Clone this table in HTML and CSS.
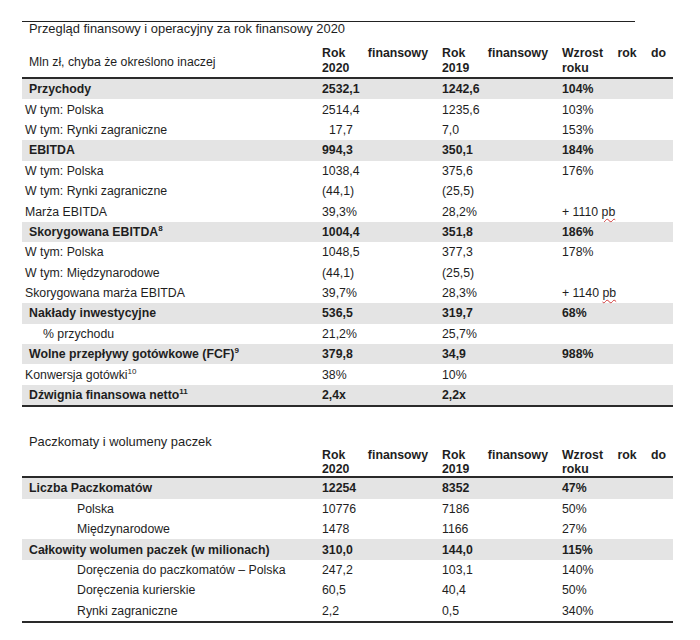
FILE: index.html
```html
<!DOCTYPE html>
<html lang="pl">
<head>
<meta charset="utf-8">
<title>Przegląd finansowy i operacyjny</title>
<link rel="stylesheet" href="styles.css">
</head>
<body>
<div class="doc">
  <div class="title title-first">Przegląd finansowy i operacyjny za rok finansowy 2020</div>
  <table class="fin">
    <colgroup><col class="c1"><col class="c2"><col class="c3"><col class="c4"></colgroup>
    <thead>
      <tr>
        <th class="lbl-head">Mln zł, chyba że określono inaczej</th>
        <th>Rok finansowy 2020</th>
        <th>Rok finansowy 2019</th>
        <th>Wzrost rok do roku</th>
      </tr>
    </thead>
    <tbody>
      <tr class="hl"><td class="lbl">Przychody</td><td>2532,1</td><td>1242,6</td><td>104%</td></tr>
      <tr><td class="lbl">W tym: Polska</td><td>2514,4</td><td>1235,6</td><td>103%</td></tr>
      <tr><td class="lbl">W tym: Rynki zagraniczne</td><td class="ind">17,7</td><td>7,0</td><td>153%</td></tr>
      <tr class="hl"><td class="lbl">EBITDA</td><td>994,3</td><td>350,1</td><td>184%</td></tr>
      <tr><td class="lbl">W tym: Polska</td><td>1038,4</td><td>375,6</td><td>176%</td></tr>
      <tr><td class="lbl">W tym: Rynki zagraniczne</td><td>(44,1)</td><td>(25,5)</td><td></td></tr>
      <tr><td class="lbl">Marża EBITDA</td><td>39,3%</td><td>28,2%</td><td>+ 1110 <span class="spell">pb</span></td></tr>
      <tr class="hl"><td class="lbl">Skorygowana EBITDA<span class="sup">8</span></td><td>1004,4</td><td>351,8</td><td>186%</td></tr>
      <tr><td class="lbl">W tym: Polska</td><td>1048,5</td><td>377,3</td><td>178%</td></tr>
      <tr><td class="lbl">W tym: Międzynarodowe</td><td>(44,1)</td><td>(25,5)</td><td></td></tr>
      <tr><td class="lbl">Skorygowana marża EBITDA</td><td>39,7%</td><td>28,3%</td><td>+ 1140 <span class="spell">pb</span></td></tr>
      <tr class="hl"><td class="lbl">Nakłady inwestycyjne</td><td>536,5</td><td>319,7</td><td>68%</td></tr>
      <tr><td class="lbl sub">% przychodu</td><td>21,2%</td><td>25,7%</td><td></td></tr>
      <tr class="hl"><td class="lbl">Wolne przepływy gotówkowe (FCF)<span class="sup">9</span></td><td>379,8</td><td>34,9</td><td>988%</td></tr>
      <tr><td class="lbl">Konwersja gotówki<span class="sup">10</span></td><td>38%</td><td>10%</td><td></td></tr>
      <tr class="hl"><td class="lbl">Dźwignia finansowa netto<span class="sup">11</span></td><td>2,4x</td><td>2,2x</td><td></td></tr>
    </tbody>
  </table>

  <div class="title title-second">Paczkomaty i wolumeny paczek</div>
  <table class="fin fin-second">
    <colgroup><col class="c1"><col class="c2"><col class="c3"><col class="c4"></colgroup>
    <thead>
      <tr>
        <th class="lbl-head"></th>
        <th>Rok finansowy 2020</th>
        <th>Rok finansowy 2019</th>
        <th>Wzrost rok do roku</th>
      </tr>
    </thead>
    <tbody>
      <tr class="hl"><td class="lbl">Liczba Paczkomatów</td><td>12254</td><td>8352</td><td>47%</td></tr>
      <tr><td class="lbl deep">Polska</td><td>10776</td><td>7186</td><td>50%</td></tr>
      <tr><td class="lbl deep">Międzynarodowe</td><td>1478</td><td>1166</td><td>27%</td></tr>
      <tr class="hl"><td class="lbl">Całkowity wolumen paczek (w milionach)</td><td>310,0</td><td>144,0</td><td>115%</td></tr>
      <tr><td class="lbl deep">Doręczenia do paczkomatów – Polska</td><td>247,2</td><td>103,1</td><td>140%</td></tr>
      <tr><td class="lbl deep">Doręczenia kurierskie</td><td>60,5</td><td>40,4</td><td>50%</td></tr>
      <tr><td class="lbl deep">Rynki zagraniczne</td><td>2,2</td><td>0,5</td><td>340%</td></tr>
    </tbody>
  </table>
</div>
</body>
</html>
```

FILE: styles.css
```css
html, body {
  margin: 0;
  padding: 0;
  background: #ffffff;
}

body {
  font-family: "Liberation Sans", Arial, sans-serif;
  font-size: 12.3px;
  color: #1e1e1e;
}

.doc {
  padding: 21px 0 0 22px;
  width: 651px;
}

.title {
  line-height: 14px;
  font-size: 12.9px;
  padding-left: 7px;
}

.title-first {
  width: 606px;
  border-top: 1px solid #222222;
}

.title-second {
  margin-top: 28px;
  line-height: 13px;
}

.fin {
  width: 651px;
  border-collapse: collapse;
  table-layout: fixed;
  border-bottom: 2px solid #2a2a2a;
}

.c1 { width: 293px; }
.c2 { width: 120px; }
.c3 { width: 120px; }
.c4 { width: 118px; }

.fin th {
  font-weight: bold;
  text-align: justify;
  line-height: 14.5px;
  padding: 10px 7px 2px 7px;
  vertical-align: top;
  border-bottom: 2px solid #2a2a2a;
}

.fin th.lbl-head {
  font-weight: normal;
  text-align: left;
  vertical-align: middle;
  padding: 14px 7px 2px 7px;
}

.fin-second th {
  padding-top: 0;
  padding-bottom: 0;
  line-height: 14px;
}

.fin td {
  height: 20.4px;
  padding: 0 7px;
  vertical-align: middle;
  line-height: 14px;
  white-space: nowrap;
}

.fin td.lbl {
  padding-left: 3px;
}

.fin tr.hl td {
  background: #e4e4e4;
  font-weight: bold;
}

.fin tr.hl td.lbl {
  padding-left: 7px;
}

.fin td.lbl.sub {
  padding-left: 21px;
}

.fin-second td.lbl {
  padding-left: 7px;
}

.fin td.lbl.deep,
.fin-second td.lbl.deep {
  padding-left: 55px;
}

.fin td.ind {
  padding-left: 14px;
}

.sup {
  font-size: 8px;
  line-height: 0;
  vertical-align: 5px;
}

.spell {
  text-decoration: underline wavy #d23a3a;
  text-decoration-thickness: 1px;
  text-underline-offset: 2px;
}
```
